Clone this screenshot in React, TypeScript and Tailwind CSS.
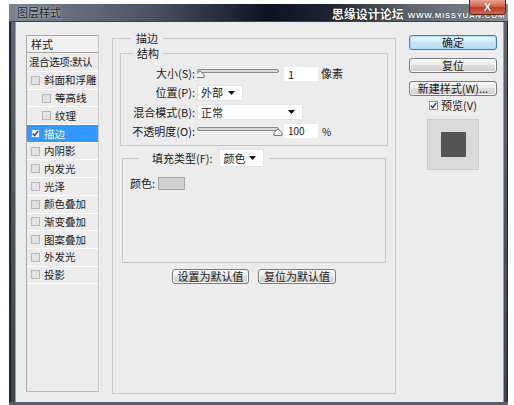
import React from "react";

const listItems: { label: string; indent?: boolean; checked?: boolean; active?: boolean }[] = [
  { label: "斜面和浮雕" },
  { label: "等高线", indent: true },
  { label: "纹理", indent: true },
  { label: "描边", checked: true, active: true },
  { label: "内阴影" },
  { label: "内发光" },
  { label: "光泽" },
  { label: "颜色叠加" },
  { label: "渐变叠加" },
  { label: "图案叠加" },
  { label: "外发光" },
  { label: "投影" },
];

function Check({ checked = false }: { checked?: boolean }) {
  return (
    <span
      className={`inline-flex w-[9px] h-[9px] shrink-0 items-center justify-center border ${
        checked ? "border-[#8090a8] bg-white" : "border-[#b8b8b8] bg-[#e2e2e2]"
      }`}
    >
      {checked && (
        <svg width="7" height="7" viewBox="0 0 7 7">
          <path d="M0.8 3.6 L2.7 5.6 L6.2 1" stroke="#2b4a9a" strokeWidth="1.6" fill="none" />
        </svg>
      )}
    </span>
  );
}

function Slider({ pos }: { pos: number }) {
  const x = 3 + pos * 78;
  return (
    <svg width="86" height="11" viewBox="0 0 86 11" className="shrink-0">
      <rect x="0.5" y="1.5" width="81" height="3" rx="1.5" fill="#d8d8d8" stroke="#8a8a8a" />
      <path
        d={`M${x - 4} 9.5 L${x - 4} 6.5 L${x} 3 L${x + 4} 6.5 L${x + 4} 9.5 Z`}
        fill="#f6f6f6"
        stroke="#777"
      />
    </svg>
  );
}

function Arrow() {
  return (
    <svg width="7" height="4" viewBox="0 0 7 4" className="shrink-0">
      <path d="M0 0 L7 0 L3.5 4 Z" fill="#111" />
    </svg>
  );
}

function Dropdown({ value, className }: { value: string; className: string }) {
  return (
    <div
      className={`flex items-center justify-between bg-white border border-[#e4e4e4] pl-[3px] pr-[7px] ${className}`}
    >
      <span>{value}</span>
      <Arrow />
    </div>
  );
}

function WinButton({
  children,
  primary = false,
  className = "",
}: {
  children: React.ReactNode;
  primary?: boolean;
  className?: string;
}) {
  return (
    <div
      className={`flex items-center justify-center h-[15px] rounded-[3px] border text-[11px] leading-none text-[#1a1a1a] whitespace-nowrap ${
        primary
          ? "border-[#3c7fb1] bg-[linear-gradient(#eef7fc,#d5ebf8_50%,#c4e2f5_50%,#b9dcf2)] shadow-[inset_0_0_0_1px_#a8dcf8]"
          : "border-[#7a7a7a] bg-[linear-gradient(#f4f4f4,#ebebeb_50%,#dddddd_50%,#cfcfcf)] shadow-[inset_0_0_0_1px_#fafafa]"
      } ${className}`}
    >
      {children}
    </div>
  );
}

export default function App() {
  return (
    <div className="w-[514px] h-[405px] bg-white pt-[4px] pl-[9px] font-['Noto_Sans_CJK_SC','Noto_Sans',sans-serif] text-[#1a1a1a] overflow-hidden">
      <div className="relative w-[499px] h-[401px] flex flex-col">
        {/* title bar */}
        <div className="h-[18px] shrink-0 flex items-center bg-[linear-gradient(90deg,#7a8490_0%,#4b5563_28%,#0b1320_52%,#1c2430_64%,#5c636c_80%,#858b92_100%)] border-b border-[#3a424c]">
          <span className="pl-[8px] text-[11px] leading-none text-[#222] [text-shadow:0_0_3px_#e8ecf0]">
            图层样式
          </span>
          <div className="ml-auto flex items-end gap-[4px] pr-[3px] h-full pb-[1px]">
            <span className="text-[12px] leading-none font-bold text-white [text-shadow:0_0_1px_#000,0_0_1px_#000]">
              思缘设计论坛
            </span>
            <span className="text-[8px] leading-none font-['Liberation_Sans',sans-serif] font-bold text-white tracking-[0.6px] [text-shadow:0_0_1px_#000]">
              WWW.MISSYUAN.COM
            </span>
          </div>
        </div>
        <div className="absolute right-[2px] top-[-4px] w-[37px] h-[15px] rounded-b-[4px] border border-[#5a2018] border-t-0 bg-[linear-gradient(#e9a493,#cf5a44_50%,#b83a24_50%,#d2694a)] flex items-center justify-center">
          <span className="text-[11px] leading-none font-bold text-white font-['Liberation_Sans',sans-serif] [text-shadow:0_0_1px_#222]">
            X
          </span>
        </div>

        {/* body */}
        <div className="flex-1 flex">
          <div className="w-[7px] flex">
            <div className="w-[2px] bg-[#1b2533]" />
            <div className="w-[4px] bg-[linear-gradient(#5d6670,#3c434c)]" />
            <div className="w-[1px] bg-[#9aa1a8]" />
          </div>

          {/* client */}
          <div className="w-[487px] bg-[#ececec] flex items-start pl-[10px] pt-[13px] gap-[13px] text-[11px]">
            {/* style list */}
            <div className="w-[73px] h-[357px] border border-[#a9a9a9] border-r-[#c9c9c9] border-b-[#b9b9b9] flex flex-col text-[10.5px] whitespace-nowrap">
              <div className="h-[17px] flex items-center pl-[4px] border-b border-[#a9a9a9] bg-[#f0f0f0] text-[11px]">样式</div>
              <div className="h-[19px] flex items-center pl-[2px] border-b border-white tracking-[-0.4px] overflow-hidden">
                混合选项:默认
              </div>
              {listItems.map((it) => (
                <div
                  key={it.label}
                  className={`h-[17.7px] flex items-center gap-[4px] border-b border-white ${
                    it.indent ? "pl-[15px]" : "pl-[4px]"
                  } ${it.active ? "bg-[#3399ff] text-white" : ""}`}
                >
                  <Check checked={it.checked} />
                  <span>{it.label}</span>
                </div>
              ))}
            </div>

            {/* main panel */}
            <fieldset className="w-[284px] h-[364px] -mt-[5px] border border-[#c8c8c8] px-[7px]">
              <legend className="ml-[11px] px-[5px] leading-[16px] text-[11px]">描边</legend>

              <fieldset className="border border-[#c8c8c8] h-[101px] -mt-[1px] pt-[3px]">
                <legend className="ml-[12px] px-[4px] leading-[16px]">结构</legend>
                <div className="flex items-center h-[19px]">
                  <span className="w-[74px] text-right">大小(S):</span>
                  <div className="ml-[2px]">
                    <Slider pos={0} />
                  </div>
                  <div className="w-[34px] h-[14px] bg-white ml-[1px] pl-[4px] leading-[14px]">1</div>
                  <span className="ml-[3px]">像素</span>
                </div>
                <div className="flex items-center h-[19px]">
                  <span className="w-[74px] text-right">位置(P):</span>
                  <Dropdown value="外部" className="ml-[2px] w-[46px] h-[16px]" />
                </div>
                <div className="flex items-center h-[20px]">
                  <span className="w-[74px] text-right">混合模式(B):</span>
                  <Dropdown value="正常" className="ml-[2px] w-[106px] h-[16px]" />
                </div>
                <div className="flex items-center h-[18px]">
                  <span className="w-[74px] text-right">不透明度(O):</span>
                  <div className="ml-[2px]">
                    <Slider pos={1} />
                  </div>
                  <div className="w-[34px] h-[14px] bg-white ml-[1px] pl-[4px] leading-[14px] text-[10px]">100</div>
                  <span className="ml-[4px] text-[10px]">%</span>
                </div>
              </fieldset>

              <fieldset className="mx-[2px] mt-[3px] h-[114px] border border-[#c8c8c8] px-[7px]">
                <legend className="ml-[9px] pl-[13px] pr-[5px] flex items-center">
                  <span>填充类型(F):</span>
                  <Dropdown value="颜色" className="ml-[6px] w-[45px] h-[18px] pl-[4px]" />
                </legend>
                <div className="flex items-center mt-[8px]">
                  <span>颜色:</span>
                  <div className="ml-[3px] w-[27px] h-[13px] bg-[#d0d0d0] border border-[#a8a8a8]" />
                </div>
              </fieldset>

              <div className="flex justify-center gap-[9px] mt-[6px]">
                <WinButton className="w-[77px]">设置为默认值</WinButton>
                <WinButton className="w-[78px]">复位为默认值</WinButton>
              </div>
            </fieldset>

            {/* right column */}
            <div className="w-[88px] flex flex-col items-center">
              <WinButton primary className="w-[88px]">确定</WinButton>
              <WinButton className="w-[88px] mt-[8px]">复位</WinButton>
              <WinButton className="w-[88px] mt-[8px]">新建样式(W)...</WinButton>
              <div className="h-[14px] mt-[2px] flex items-center gap-[3px] text-[11px]">
                <Check checked />
                <span>预览(V)</span>
              </div>
              <div className="mt-[7px] w-[52px] h-[51px] bg-[#dadada] border border-[#cdcdcd] flex items-center justify-center">
                <div className="w-[25px] h-[25px] bg-[#555555]" />
              </div>
            </div>
          </div>

          <div className="w-[5px] flex">
            <div className="w-[1px] bg-[#9aa1a8]" />
            <div className="w-[3px] bg-[linear-gradient(#5d6670,#3c434c)]" />
            <div className="w-[1px] bg-[#1b2533]" />
          </div>
        </div>
        <div className="h-[3px] bg-[#565d66]" />
      </div>
    </div>
  );
}
